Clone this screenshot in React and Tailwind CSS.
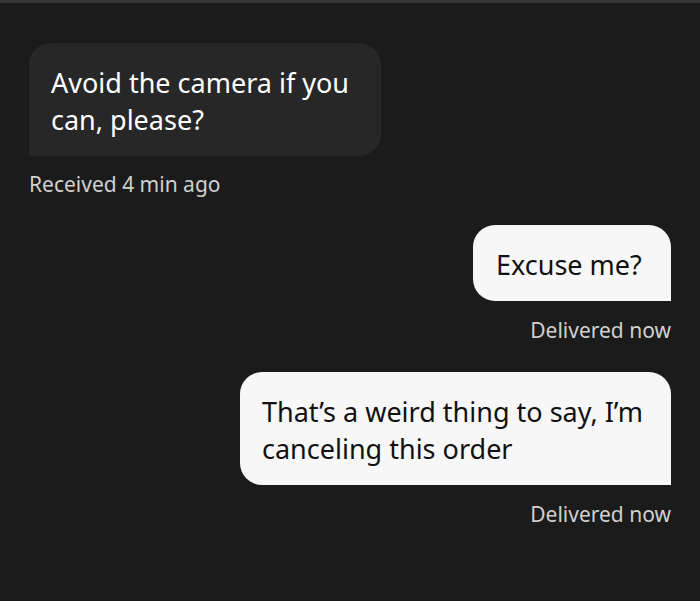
export default function App() {
  const font = { fontFamily: "'Noto Sans', sans-serif" };
  return (
    <div className="w-[700px] h-[601px] bg-[#1b1b1b] border-t-[3px] border-[#353535] overflow-hidden" style={font}>
      <div className="pt-[40px] pl-[29px] pr-[29px] flex flex-col">
        <div className="self-start w-[352px] h-[113px] bg-[#272727] rounded-[22px] rounded-bl-none pl-[22px] pt-[21px] text-white text-[27px] leading-[37px] whitespace-nowrap">
          Avoid the camera if you<br />can, please?
        </div>
        <div className="mt-[15px] text-[21px] leading-[26px] text-[#d0d0d0] whitespace-nowrap">Received 4 min ago</div>
        <div className="self-end mt-[28px] w-[198px] h-[76px] bg-[#f7f7f7] rounded-[22px] rounded-br-none flex items-center pl-[23px] pt-[5px] text-[#111] text-[27px] whitespace-nowrap">
          Excuse me?
        </div>
        <div className="self-end mt-[16px] text-[21px] leading-[26px] text-[#d0d0d0] whitespace-nowrap">Delivered now</div>
        <div className="self-end mt-[29px] w-[431px] h-[113px] bg-[#f7f7f7] rounded-[22px] rounded-br-none pl-[22px] pt-[21px] text-[#111] text-[27px] leading-[37px] whitespace-nowrap">
          That’s a weird thing to say, I’m<br />canceling this order
        </div>
        <div className="self-end mt-[16px] text-[21px] leading-[26px] text-[#d0d0d0] whitespace-nowrap">Delivered now</div>
      </div>
    </div>
  );
}
